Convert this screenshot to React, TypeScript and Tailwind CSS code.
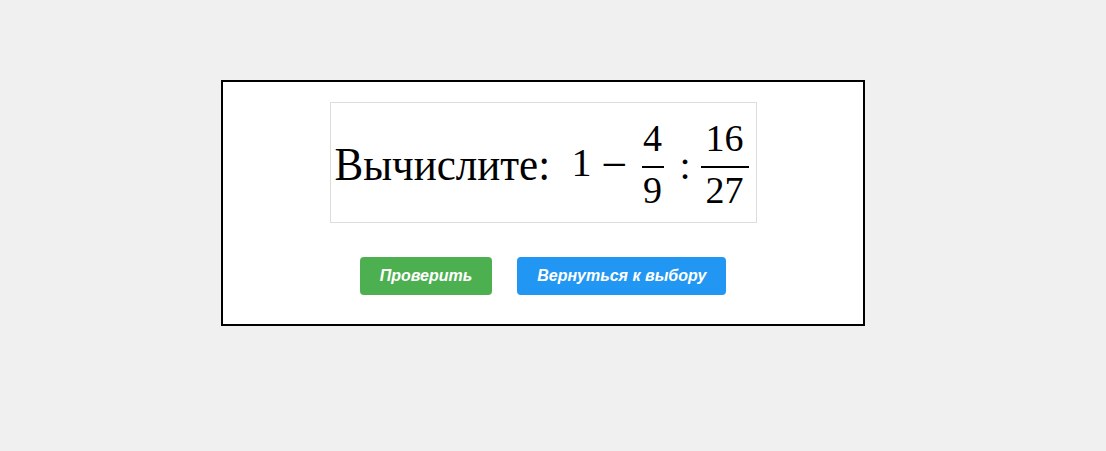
import React from "react";

const serif = { fontFamily: '"Liberation Serif", "Times New Roman", serif' };

function Fraction({ top, bottom, width }: { top: string; bottom: string; width: string }) {
  return (
    <span className={`mt-[16px] flex flex-col items-center text-[38px] leading-none ${width}`}>
      <span>{top}</span>
      <span className="mt-[9px] h-[2px] w-full bg-black" />
      <span className="mt-[3px]">{bottom}</span>
    </span>
  );
}

export default function App() {
  return (
    <div className="min-h-screen bg-[#f0f0f0] pt-[80px]">
      <div className="ml-[221px] flex w-[644px] flex-col items-center border-2 border-black bg-white pb-[29px] pt-[20px]">
        <div
          className="flex h-[121px] w-[427px] items-start border border-[#dddddd] bg-white pl-[4px] text-black"
          style={serif}
        >
          <span className="mt-[40px] w-[216px] scale-y-[1.09] whitespace-nowrap text-[43px] leading-none">
            Вычислите:
          </span>
          <span className="ml-[21px] mt-[40px] w-[17px] text-center text-[40px] leading-none">1</span>
          <span className="ml-[13px] mt-[39px] w-[26px] text-center text-[46px] leading-none">−</span>
          <Fraction top="4" bottom="9" width="ml-[14px] w-[22px]" />
          <span className="ml-[16px] mt-[43px] w-[10px] text-center text-[40px] leading-none">:</span>
          <Fraction top="16" bottom="27" width="ml-[11px] w-[48px]" />
        </div>
        <div
          className="mt-[34px] flex gap-[25px] text-[16px] font-bold italic text-white"
          style={{ fontFamily: '"Liberation Sans", Arial, sans-serif' }}
        >
          <button className="h-[38px] rounded-[4px] bg-[#4caf50] px-5">Проверить</button>
          <button className="h-[38px] rounded-[4px] bg-[#2196f3] px-5">Вернуться к выбору</button>
        </div>
      </div>
    </div>
  );
}
